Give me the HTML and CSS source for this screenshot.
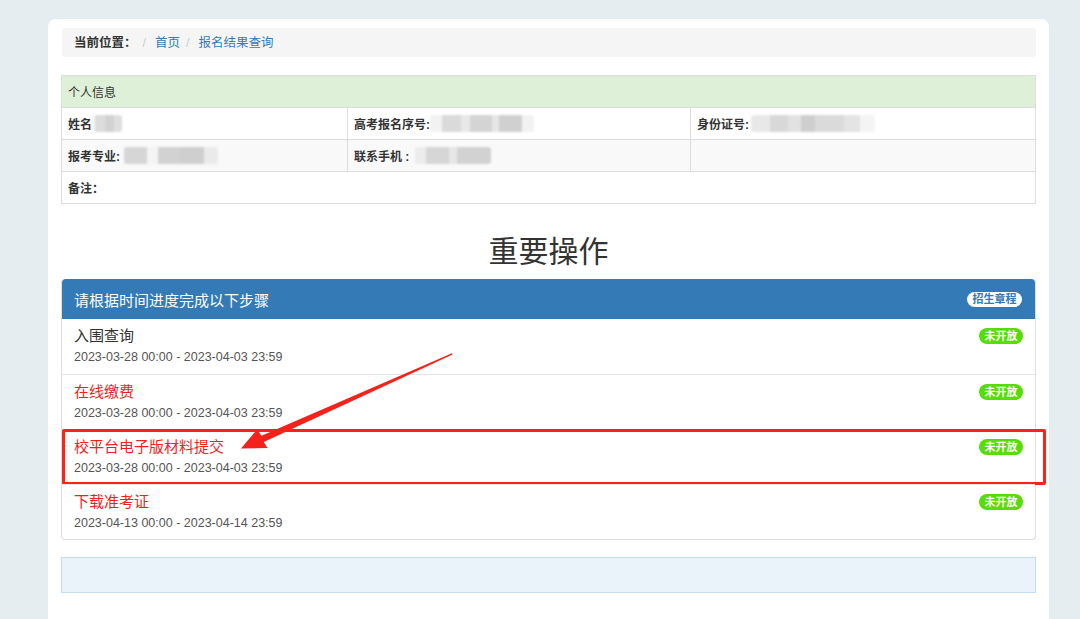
FILE: index.html
```html
<!DOCTYPE html>
<html lang="zh-CN">
<head>
<meta charset="utf-8">
<title>报名结果查询</title>
<link rel="stylesheet" href="styles.css">
</head>
<body>
<div class="page">
  <div class="crumb">
    <span class="crumb-label">当前位置：</span>
    <span class="sep">/</span>
    <a class="crumb-link">首页</a>
    <span class="sep">/</span>
    <a class="crumb-link">报名结果查询</a>
  </div>

  <table class="info">
    <tr class="info-head"><td colspan="3">个人信息</td></tr>
    <tr>
      <td class="c1"><span class="lbl">姓名</span><span class="mask mask-name"></span></td>
      <td class="c2"><span class="lbl">高考报名序号:</span><span class="mask mask-seq"></span></td>
      <td class="c3"><span class="lbl">身份证号:</span><span class="mask mask-id"></span></td>
    </tr>
    <tr class="striped">
      <td><span class="lbl">报考专业:</span><span class="mask mask-major"></span></td>
      <td><span class="lbl">联系手机 :</span><span class="mask mask-phone"></span></td>
      <td></td>
    </tr>
    <tr>
      <td colspan="3"><span class="lbl">备注：</span></td>
    </tr>
  </table>

  <h2 class="title">重要操作</h2>

  <div class="panel">
    <div class="panel-head">
      <span>请根据时间进度完成以下步骤</span>
      <span class="badge badge-white">招生章程</span>
    </div>
    <div class="item">
      <div class="item-text">
        <div class="item-title">入围查询</div>
        <div class="item-date">2023-03-28 00:00 - 2023-04-03 23:59</div>
      </div>
      <span class="badge badge-green">未开放</span>
    </div>
    <div class="item">
      <div class="item-text">
        <div class="item-title red">在线缴费</div>
        <div class="item-date">2023-03-28 00:00 - 2023-04-03 23:59</div>
      </div>
      <span class="badge badge-green">未开放</span>
    </div>
    <div class="item marked">
      <div class="item-text">
        <div class="item-title red">校平台电子版材料提交</div>
        <div class="item-date">2023-03-28 00:00 - 2023-04-03 23:59</div>
      </div>
      <span class="badge badge-green">未开放</span>
      <div class="highlight"></div>
    </div>
    <div class="item">
      <div class="item-text">
        <div class="item-title red">下载准考证</div>
        <div class="item-date">2023-04-13 00:00 - 2023-04-14 23:59</div>
      </div>
      <span class="badge badge-green">未开放</span>
    </div>
  </div>

  <div class="notice"></div>
</div>

<svg class="arrow" width="1080" height="619" viewBox="0 0 1080 619" xmlns="http://www.w3.org/2000/svg">
  <polygon fill="#f5221b" points="452,353.3 261.5,435.8 257,429.5 241,448.5 267.5,448 263.8,442 452.6,354.6"/>
</svg>
</body>
</html>
```

FILE: styles.css
```css
html, body {
  margin: 0;
  padding: 0;
}
body {
  background: #e6edf1;
  font-family: "Liberation Sans", "Noto Sans CJK SC", sans-serif;
  color: #333;
  height: 619px;
  overflow: hidden;
}
.page {
  margin: 19px 0 0 48px;
  width: 1001px;
  height: 620px;
  box-sizing: border-box;
  background: #fff;
  border-radius: 8px 8px 0 0;
  padding: 9px 13px 0 13px;
}
.crumb {
  margin-left: 1px;
  height: 29px;
  line-height: 29px;
  background: #f5f5f5;
  border-radius: 4px;
  padding: 0 12px;
  font-size: 12.5px;
  display: flex;
  align-items: center;
}
.crumb-label {
  font-weight: bold;
  color: #333;
  position: relative;
  top: 1px;
}
.sep {
  color: #ccc;
  margin: 0 9px 0 6px;
  position: relative;
  top: 1px;
}
.crumb-link {
  color: #337ab7;
  position: relative;
  top: 1px;
}
.info {
  margin-top: 18px;
  width: 100%;
  border-collapse: collapse;
  font-size: 12px;
}
.info td {
  border: 1px solid #ddd;
  height: 31px;
  padding: 0 6px;
  vertical-align: middle;
  white-space: nowrap;
}
.info-head td {
  background: #dff0d8;
  color: #333;
}
.c1 { width: 273px; }
.c2 { width: 330px; }
.striped td {
  background: #f9f9f9;
}
.lbl {
  font-weight: bold;
  color: #333;
  vertical-align: middle;
}
.mask {
  display: inline-block;
  vertical-align: middle;
  height: 17px;
  border-radius: 3px;
  filter: blur(1px);
}
.mask-name {
  width: 30px;
  background: linear-gradient(90deg, #f4f4f4 0 10%, #dcdcdc 10% 45%, #d2d2d2 45% 75%, #dedede 75%);
}
.mask-seq {
  width: 104px;
  background: linear-gradient(90deg, #f2f2f2 0 12%, #dadada 12% 30%, #e8e8e8 30% 38%, #d4d4d4 38% 60%, #e6e6e6 60% 66%, #d0d0d0 66% 88%, #f2f2f2 88%);
}
.mask-id {
  width: 124px;
  margin-left: 2px;
  background: linear-gradient(90deg, #e8e8e8 0 15%, #d8d8d8 15% 30%, #e2e2e2 30% 40%, #cecece 40% 52%, #dadada 52% 75%, #e4e4e4 75% 88%, #f4f4f4 88%);
}
.mask-major {
  width: 94px;
  margin-left: 4px;
  background: linear-gradient(90deg, #d6d6d6 0 24%, #f4f4f4 24% 36%, #d2d2d2 36% 60%, #cfcfcf 60% 85%, #eaeaea 85%);
}
.mask-phone {
  width: 76px;
  margin-left: 6px;
  background: linear-gradient(90deg, #ececec 0 14%, #d6d6d6 14% 45%, #e6e6e6 45% 55%, #d2d2d2 55% 100%);
}
.title {
  margin: 30px 0 9px;
  text-align: center;
  font-size: 30px;
  line-height: 36px;
  font-weight: normal;
  color: #333;
}
.panel {
  border: 1px solid #ddd;
  border-top: 0;
  border-radius: 4px;
}
.panel-head {
  height: 40px;
  background: #337ab7;
  border-radius: 4px 4px 0 0;
  color: #fff;
  font-size: 15px;
  padding: 0 12px 0 12px;
  display: flex;
  align-items: center;
  justify-content: space-between;
}
.badge {
  display: inline-block;
  font-size: 11px;
  font-weight: bold;
  border-radius: 8px;
  text-align: center;
  white-space: nowrap;
}
.badge-white {
  background: #fff;
  color: #337ab7;
  width: 55px;
  height: 15px;
  line-height: 15px;
  margin-right: 1px;
}
.badge-green {
  background: #55dd06;
  color: #fff;
  width: 44px;
  height: 16px;
  line-height: 16px;
  margin-top: 9px;
}
.item {
  position: relative;
  height: 55px;
  box-sizing: border-box;
  border-top: 1px solid #e6e6e6;
  padding: 0 12px 0 12px;
  display: flex;
  justify-content: space-between;
  align-items: flex-start;
}
.panel-head + .item {
  border-top: 0;
}
.item-text {
  padding-top: 7px;
}
.item-title {
  font-size: 15px;
  line-height: 20px;
  color: #333;
}
.item-title.red {
  color: #f21d1d;
}
.item-date {
  margin-top: 2px;
  font-size: 12.5px;
  line-height: 18px;
  color: #555;
}
.highlight {
  position: absolute;
  left: 0;
  right: -11px;
  top: -1px;
  bottom: -1px;
  border: 3px solid #ff2219;
  border-radius: 2px;
  pointer-events: none;
}
.notice {
  margin-top: 17px;
  height: 34px;
  background: #ebf3fa;
  border: 1px solid #c3dcef;
}
.arrow {
  position: absolute;
  left: 0;
  top: 0;
  pointer-events: none;
}
```
